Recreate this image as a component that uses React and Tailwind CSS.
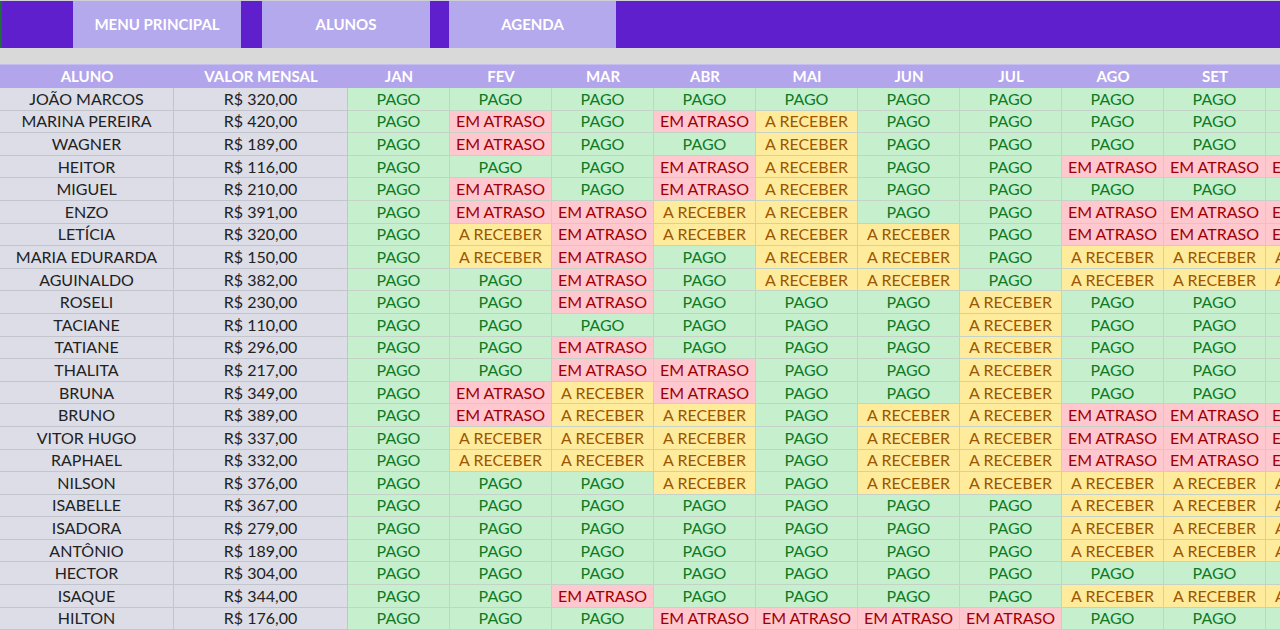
import React from 'react';

// P = PAGO, E = EM ATRASO, R = A RECEBER
const MESES = ['JAN', 'FEV', 'MAR', 'ABR', 'MAI', 'JUN', 'JUL', 'AGO', 'SET', 'OUT'];

const alunos = [
  ['JOÃO MARCOS', '320,00', 'PPPPPPPPP'],
  ['MARINA PEREIRA', '420,00', 'PEPERPPPP'],
  ['WAGNER', '189,00', 'PEPPRPPPP'],
  ['HEITOR', '116,00', 'PPPERPPEE'],
  ['MIGUEL', '210,00', 'PEPERPPPP'],
  ['ENZO', '391,00', 'PEERRPPEE'],
  ['LETÍCIA', '320,00', 'PRERRRPEE'],
  ['MARIA EDURARDA', '150,00', 'PREPRRPRR'],
  ['AGUINALDO', '382,00', 'PPEPRRPRR'],
  ['ROSELI', '230,00', 'PPEPPPRPP'],
  ['TACIANE', '110,00', 'PPPPPPRPP'],
  ['TATIANE', '296,00', 'PPEPPPRPP'],
  ['THALITA', '217,00', 'PPEEPPRPP'],
  ['BRUNA', '349,00', 'PEREPPRPP'],
  ['BRUNO', '389,00', 'PERRPRREE'],
  ['VITOR HUGO', '337,00', 'PRRRPRREE'],
  ['RAPHAEL', '332,00', 'PRRRPRREE'],
  ['NILSON', '376,00', 'PPPRPRRRR'],
  ['ISABELLE', '367,00', 'PPPPPPPRR'],
  ['ISADORA', '279,00', 'PPPPPPPRR'],
  ['ANTÔNIO', '189,00', 'PPPPPPPRR'],
  ['HECTOR', '304,00', 'PPPPPPPPP'],
  ['ISAQUE', '344,00', 'PPEPPPPRR'],
  ['HILTON', '176,00', 'PPPEEEEPP'],
];

const STATUS = {
  P: { label: 'PAGO', cls: 'bg-[#c6efce] text-[#0f7a24]' },
  E: { label: 'EM ATRASO', cls: 'bg-[#ffc7ce] text-[#9c0006]' },
  R: { label: 'A RECEBER', cls: 'bg-[#ffeb9c] text-[#9c5700]' },
};

export default function App() {
  return (
    <div
      className="w-[1280px] h-[630px] overflow-hidden bg-[#d9d9d9]"
      style={{ fontFamily: 'Lato, "Open Sans", sans-serif' }}
    >
      {/* MENU */}
      <div className="flex h-[48px] bg-[#5f1fcc] border-t border-[#cfcfd6]">
        <div className="w-[73px] border-l-2 border-[#1f6b3a]" />
        <div className="w-[168px] bg-[#b4a9ec] flex items-center justify-center text-white font-bold text-[15px]">
          MENU PRINCIPAL
        </div>
        <div className="w-[21px]" />
        <div className="w-[168px] bg-[#b4a9ec] flex items-center justify-center text-white font-bold text-[15px]">
          ALUNOS
        </div>
        <div className="w-[19px]" />
        <div className="w-[167px] bg-[#b4a9ec] flex items-center justify-center text-white font-bold text-[15px]">
          AGENDA
        </div>
      </div>

      <div className="h-[17px] bg-[#d9d9d9] border-b border-[#c4bdf0]" />

      {/* TABELA */}
      <div className="grid grid-cols-[174px_174px_repeat(10,102px)] w-[1368px]">
        {['ALUNO', 'VALOR MENSAL', ...MESES].map((h) => (
          <div
            key={h}
            className="h-[23px] bg-[#b2a5ec] text-white font-bold text-[15px] flex items-center justify-center"
          >
            {h}
          </div>
        ))}

        {alunos.map(([nome, valor, st]) => {
          const s = (st + st[8]).split('');
          return (
            <React.Fragment key={nome}>
              <div className="h-[22.6px] bg-[#dcdde6] text-[#222] text-[16px] flex items-center justify-center border-r border-b border-[#c3c5cc]">
                {nome}
              </div>
              <div className="h-[22.6px] bg-[#dcdde6] text-[#222] text-[16px] flex items-center justify-center border-r border-b border-[#c3c5cc]">
                R$ {valor}
              </div>
              {s.map((k, i) => (
                <div
                  key={i}
                  className={`h-[22.6px] text-[16px] flex items-center justify-center border-r border-b border-[#c5d2c8] whitespace-nowrap overflow-hidden ${STATUS[k].cls}`}
                >
                  {STATUS[k].label}
                </div>
              ))}
            </React.Fragment>
          );
        })}
      </div>
    </div>
  );
}
